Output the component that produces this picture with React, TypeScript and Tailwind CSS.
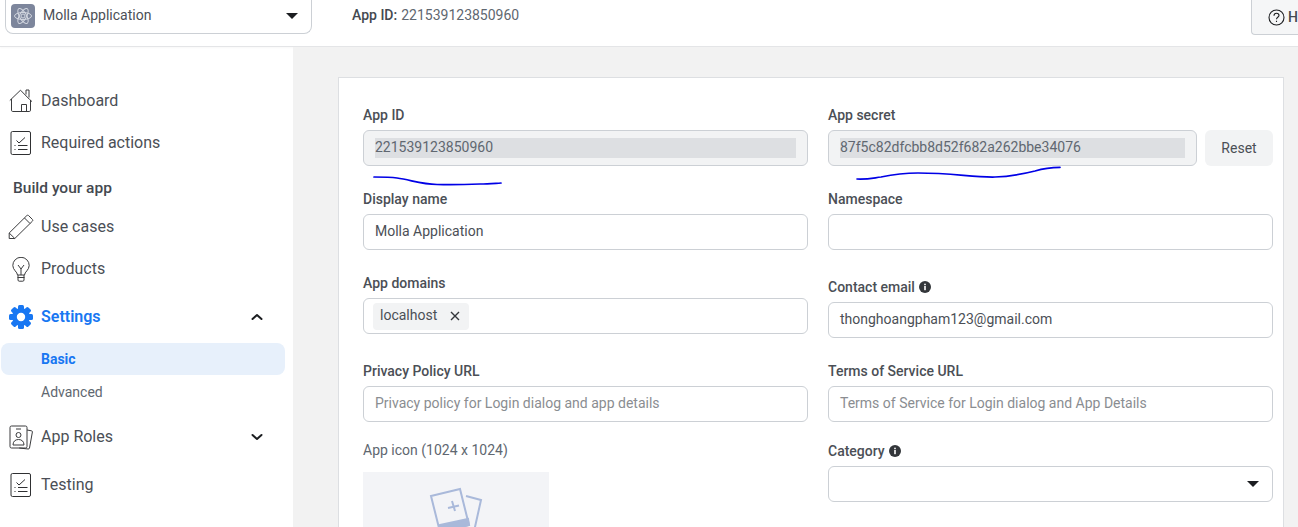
import React from "react";

const Home = () => (
  <svg width="24" height="24" viewBox="0 0 24 24" fill="none" stroke="#3a3b3d" strokeWidth="1">
    <path d="M0.8 11.5 11.500 1.200l9 9.200 2.500 2.200M2.500 10v11.200c0 .8.400 1.300 1.200 1.300h16.600c.8 0 1.200-.5 1.200-1.300V11M12.500 22.500v-7h5v7M17 5.500V1h3v7.500" />
  </svg>
);
const Check = () => (
  <svg width="22" height="26" viewBox="0 0 22 26" fill="none" stroke="#2f3032" strokeWidth="1">
    <rect x="1" y="1.500" width="19.500" height="23" rx="1.500" />
    <path d="M6.500 10.500 9 13l6-5.500M4.500 15.500h1M8 15.500h9.500M4.500 19.500h1M8 19.500h9.500" />
  </svg>
);
const Pencil = () => (
  <svg width="26" height="26" viewBox="0 0 26 26" fill="none" stroke="#3a3b3d" strokeWidth="1">
    <path d="M1.200 24.500V19L18.800 1.600c.6-.5 1.300-.5 1.800 0l3.800 3.800c.5.5.5 1.200 0 1.800L6.800 24.500ZM16.500 4l5.500 5.500M1.200 19l5.600 5.500" />
  </svg>
);
const Bulb = () => (
  <svg width="18" height="25" viewBox="0 0 18 25" fill="none" stroke="#3a3b3d" strokeWidth="1">
    <path d="M5.500 18c0-3-4.700-5-4.700-9.500a8.200 8.200 0 0 1 16.400 0C17.200 13 12.500 15 12.500 18ZM6 8l3 4 3-4M9 12v6M5.500 20.500h7M6 18v5c0 .8.500 1.200 1.200 1.200h3.600c.7 0 1.200-.4 1.200-1.200v-5" />
  </svg>
);
const Gear = () => (
  <svg width="24" height="24" viewBox="0 0 24 24" fill="#1877f2">
    {[0, 45, 90, 135, 180, 225, 270, 315].map((a) => (
      <rect key={a} x="9" y="0" width="6" height="6" rx="1.500" transform={`rotate(${a} 12 12)`} />
    ))}
    <path fillRule="evenodd" d="M12 3a9 9 0 1 0 0 18 9 9 0 0 0 0-18Zm0 4.800a4.200 4.200 0 1 1 0 8.400 4.200 4.200 0 0 1 0-8.400Z" />
  </svg>
);
const Roles = () => (
  <svg width="24" height="25" viewBox="0 0 24 25" fill="none" stroke="#3a3b3d" strokeWidth="1">
    <rect x="1" y="1" width="17" height="22" rx="1.500" />
    <path d="M7 4h5M18 5l4.500.8c.6.100 1 .6.900 1.200L20.500 23c-.1.700-.7 1.100-1.300 1l-9-1" />
    <circle cx="9.500" cy="10" r="2.500" />
    <path d="M4 20c0-3.500 2.200-5.500 5.500-5.500S15 16.500 15 20Z" />
  </svg>
);
const Chevron = ({ up }: { up?: boolean }) => (
  <svg width="12" height="8" viewBox="0 0 12 8" fill="none" stroke="#1c1e21" strokeWidth="2" strokeLinecap="round" strokeLinejoin="round">
    <path d={up ? "M1.500 6 6 2l4.500 4" : "M1.500 2 6 6l4.500-4"} />
  </svg>
);
const Caret = () => <span className="h-0 w-0 border-x-[6px] border-t-[6px] border-x-transparent border-t-[#1c1e21]" />;
const Info = () => (
  <svg width="12" height="12" viewBox="0 0 12 12">
    <circle cx="6" cy="6" r="6" fill="#33363a" />
    <rect x="5.200" y="5" width="1.600" height="4.200" fill="#fff" />
    <rect x="5.200" y="2.700" width="1.600" height="1.500" fill="#fff" />
  </svg>
);

function NavRow({ icon, label, active, chevron, className }: { icon: React.ReactNode; label: string; active?: boolean; chevron?: "up" | "down"; className: string }) {
  return (
    <div className={`flex h-6 items-center ${className}`}>
      <span className="flex w-[41px] shrink-0 justify-center pl-[1px]">{icon}</span>
      <span className={`text-base ${active ? "font-semibold text-[#1877f2]" : "text-[#4b4f56]"}`}>{label}</span>
      {chevron && (
        <span className="ml-auto mr-[30px] flex">
          <Chevron up={chevron === "up"} />
        </span>
      )}
    </div>
  );
}

function Label({ children, className = "" }: { children: React.ReactNode; className?: string }) {
  return <div className={`flex h-5 items-center gap-[4px] text-[14px] font-medium leading-5 text-[#4b4f56] ${className}`}>{children}</div>;
}

function Box({ children, disabled, placeholder, className = "" }: { children?: React.ReactNode; disabled?: boolean; placeholder?: boolean; className?: string }) {
  return (
    <div
      className={`mt-[5px] flex h-9 shrink-0 items-center rounded-md border border-[#ccd0d5] px-[11px] pb-[1px] text-[14px] ${
        disabled ? "bg-[#f2f3f4]" : "bg-white"
      } ${disabled ? "text-[#606770]" : placeholder ? "text-[#8a8d91]" : "text-[#4b4f56]"} ${className}`}
    >
      {children}
    </div>
  );
}

const Selected = ({ text }: { text: string }) => <span className="flex h-5 w-full items-center bg-[#dddfe2]">{text}</span>;

export default function App() {
  return (
    <div className="flex h-[527px] w-[1298px] flex-col overflow-hidden bg-white font-['Roboto',sans-serif]">
      <header className="flex h-[47px] shrink-0 items-start border-b border-[#e4e5e7] shadow-[0_1px_2px_rgba(0,0,0,0.03)]">
        <div className="ml-[5px] flex h-[34px] w-[307px] items-center rounded-b-lg border border-t-0 border-[#ccd0d5] pb-[2px] pl-[5px] pr-[13px]">
          <span className="flex h-6 w-6 items-center justify-center rounded bg-[#7d869c]">
            <svg width="20" height="20" viewBox="0 0 20 20" fill="none" stroke="#d3d7e0" strokeWidth="1">
              <ellipse cx="10" cy="10" rx="8.500" ry="3.500" />
              <ellipse cx="10" cy="10" rx="8.500" ry="3.500" transform="rotate(60 10 10)" />
              <ellipse cx="10" cy="10" rx="8.500" ry="3.500" transform="rotate(120 10 10)" />
              <circle cx="10" cy="10" r="2" />
            </svg>
          </span>
          <span className="ml-2 text-[14px] text-[#4b4f56]">Molla Application</span>
          <span className="ml-auto flex">
            <Caret />
          </span>
        </div>
        <div className="ml-10 mt-[5px] flex h-5 items-center gap-1 text-[14px] text-[#606770]">
          <span className="font-medium text-[#444950]">App ID:</span>
          <span>221539123850960</span>
        </div>
        <div className="ml-auto flex h-[35px] w-[47px] items-center overflow-hidden rounded-bl border border-r-0 border-t-0 border-[#ccd0d5] bg-[#f5f6f7] pl-4">
          <svg width="17" height="17" viewBox="0 0 17 17" fill="none" stroke="#1c1e21" strokeWidth="1.100" className="shrink-0">
            <circle cx="8.500" cy="8.500" r="7.500" />
            <path d="M6 6.700c0-1.500 1.100-2.400 2.500-2.400S11 5.200 11 6.500c0 1.700-2.500 1.900-2.500 3.700M8.500 11.700v1.300" />
          </svg>
          <span className="ml-[3px] text-[14px] font-medium text-[#444950]">Help</span>
        </div>
      </header>

      <div className="flex min-h-0 flex-1">
        <aside className="w-[293px] shrink-0 pt-[42px]">
          <NavRow className="" icon={<Home />} label="Dashboard" />
          <NavRow className="mt-[18px]" icon={<Check />} label="Required actions" />
          <div className="ml-[13px] mt-[23px] text-[15.5px] font-medium leading-5 text-[#444950]">Build your app</div>
          <NavRow className="mt-[17px]" icon={<Pencil />} label="Use cases" />
          <NavRow className="mt-[18px]" icon={<Bulb />} label="Products" />
          <NavRow className="mt-[24px]" icon={<Gear />} label="Settings" active chevron="up" />
          <div className="ml-[1px] mt-[14px] flex h-8 w-[284px] items-center rounded-lg bg-[#e7f0fb] pl-10 text-[14px] font-bold text-[#1877f2]">Basic</div>
          <div className="mt-[7px] flex h-5 items-center pl-[41px] text-[14px] text-[#606770]">Advanced</div>
          <NavRow className="mt-[23px]" icon={<Roles />} label="App Roles" chevron="down" />
          <NavRow className="mt-6" icon={<Check />} label="Testing" />
        </aside>

        <main className="relative min-w-0 flex-1 bg-[#f2f2f2] pl-[45px] pr-[14px] pt-[30px]">
          <div className="flex h-[600px] gap-5 border border-[#dddfe2] bg-white pl-6 pr-[10px] pt-[27px]">
            <div className="flex w-[445px] shrink-0 flex-col">
              <Label>App ID</Label>
              <Box disabled>
                <Selected text="221539123850960" />
              </Box>
              <Label className="mt-[23px]">Display name</Label>
              <Box>Molla Application</Box>
              <Label className="mt-[23px]">App domains</Label>
              <div className="mt-[5px] flex h-9 shrink-0 items-center rounded-md border border-[#ccd0d5] px-[9px]">
                <span className="flex h-[27px] w-[96px] items-center justify-between rounded bg-[#f2f3f4] pb-[1px] pl-[7px] pr-[9px] text-[14px] text-[#4b4f56]">
                  localhost
                  <svg width="10" height="10" viewBox="0 0 10 10" stroke="#33363a" strokeWidth="1.400">
                    <path d="M1 1l8 8M9 1l-8 8" />
                  </svg>
                </span>
              </div>
              <Label className="mt-[27px]">Privacy Policy URL</Label>
              <Box placeholder>Privacy policy for Login dialog and app details</Box>
              <div className="mt-[18px] flex h-5 items-center text-[14px] text-[#606770]">App icon (1024 x 1024)</div>
              <div className="mt-3 flex h-[120px] w-[186px] shrink-0 justify-center bg-[#f3f4f7] pt-[15px]">
                <svg width="56" height="60" viewBox="0 0 56 60" fill="none" stroke="#a9b9da" strokeWidth="2">
                  <path d="M3 9 32 2l9 36-29 7Z" />
                  <path d="M12 38l28-6 1 6-29 7Z" fill="#a9b9da" />
                  <path d="M20 21l11-2.500M24 14l3 10" />
                  <path d="M38 9l15 4-8 36" />
                </svg>
              </div>
            </div>
            <div className="flex w-[445px] shrink-0 flex-col">
              <Label>App secret</Label>
              <div className="flex gap-2">
                <Box disabled className="flex-1">
                  <Selected text="87f5c82dfcbb8d52f682a262bbe34076" />
                </Box>
                <button className="mt-[5px] h-9 w-[68px] shrink-0 rounded-md bg-[#f2f3f4] text-[14px] text-[#4b4f56]">Reset</button>
              </div>
              <Label className="mt-[23px]">Namespace</Label>
              <Box />
              <Label className="mt-[27px]">
                Contact email <Info />
              </Label>
              <Box>thonghoangpham123@gmail.com</Box>
              <Label className="mt-[23px]">Terms of Service URL</Label>
              <Box placeholder>Terms of Service for Login dialog and App Details</Box>
              <Label className="mt-[19px]">
                Category <Info />
              </Label>
              <div className="mt-[5px] flex h-9 shrink-0 items-center justify-end rounded-md border border-[#ccd0d5] pr-[13px]">
                <Caret />
              </div>
            </div>
          </div>
          <svg className="pointer-events-none absolute left-[70px] top-[119px]" width="710" height="30" viewBox="0 0 710 30" fill="none" stroke="#0000e6" strokeWidth="1.700" strokeLinecap="round">
            <path d="M11 11C20 11 27 11 34 12C48 14 58 18 74 18.500C90 19 105 18.500 117 18C125 18 130 17.500 138 17" />
            <path d="M494 13C505 13.500 510 12 518 11C530 8.500 540 7 555 7C590 7 610 11.500 632 11C650 10.500 660 8 672 5C680 2.500 685 1.300 697 1.300" />
          </svg>
        </main>
      </div>
    </div>
  );
}
